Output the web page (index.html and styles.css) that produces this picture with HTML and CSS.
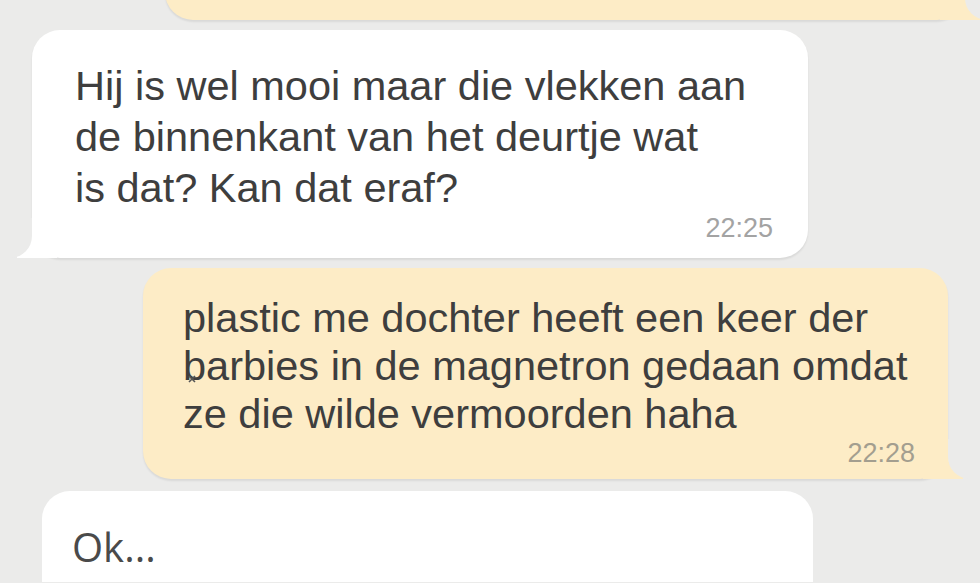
FILE: index.html
```html
<!DOCTYPE html>
<html lang="nl">
    <head>
        <meta charset="UTF-8" />
        <meta name="viewport" content="width=device-width, initial-scale=1.0" />
        <title>Chat</title>
        <link rel="stylesheet" href="styles.css">
    </head>
    <body>
        <div class="chat">
            <div class="bubble out top-bubble"></div>

            <div class="bubble in first">
                <p class="text">Hij is wel mooi maar die vlekken aan<br />de binnenkant van het deurtje wat<br />is dat? Kan dat eraf?</p>
                <div class="time">22:25</div>
            </div>

            <div class="bubble out second">
                <p class="text">plastic me dochter heeft een keer der<br /><span class="mark">b<svg class="stray" width="10" height="10" viewBox="0 0 10 10"><path d="M2 2 L8 8 M8 2 L2 8" stroke="#555" stroke-width="1.6" /></svg></span>arbies in de magnetron gedaan omdat<br />ze die wilde vermoorden haha</p>
                <div class="time">22:28</div>
            </div>

            <div class="bubble in third">
                <p class="text ok">Ok...</p>
            </div>
        </div>
    </body>
</html>
```

FILE: styles.css
```css
body {
    margin: 0;
    background-color: #ebebea;
    font-family: "Liberation Sans", Arial, sans-serif;
    overflow: hidden;
    height: 583px;
}
.chat {
    display: flex;
    flex-direction: column;
    gap: 10px;
}
.bubble {
    position: relative;
    border-radius: 28px;
    box-shadow: 0 2px 2px rgba(0, 0, 0, 0.08);
}
.in {
    background-color: #fff;
    align-self: flex-start;
}
.out {
    background-color: #fdecc6;
    align-self: flex-end;
}
.in::before,
.out::before {
    content: "";
    position: absolute;
    bottom: 0;
    width: 40px;
    height: 40px;
}
.in::after,
.out::after {
    content: "";
    position: absolute;
    bottom: 0;
    width: 40px;
    height: 40px;
    background-color: #ebebea;
}
.in::before {
    left: -15px;
    background-color: #fff;
}
.in::after {
    left: -40px;
    border-bottom-right-radius: 22px;
}
.out::before {
    right: -15px;
    background-color: #fdecc6;
}
.out::after {
    right: -40px;
    border-bottom-left-radius: 22px;
}
.top-bubble {
    width: 800px;
    height: 100px;
    margin-top: -80px;
    margin-right: 15px;
}
.text {
    margin: 0;
    font-size: 41.5px;
    line-height: 51px;
    color: #3e3e3e;
}
.time {
    text-align: right;
    font-size: 27px;
    color: #a3a3a3;
    line-height: 30px;
}
.first {
    width: 776px;
    margin-left: 32px;
    padding: 30px 35px 15px 43px;
    box-sizing: border-box;
    height: 228px;
}
.second {
    width: 805px;
    margin-right: 32px;
    padding: 26px 33px 15px 40px;
    box-sizing: border-box;
    height: 211px;
}
.second .text {
    line-height: 48px;
}
.second .time {
    color: #a39e8f;
}
.third {
    width: 771px;
    margin-left: 42px;
    margin-top: 2px;
    padding: 30px 30px 0 30px;
    box-sizing: border-box;
    height: 91px;
    border-bottom-left-radius: 0;
    border-bottom-right-radius: 0;
    box-shadow: none;
}
.third::before,
.third::after {
    display: none;
}
.ok {
    font-family: "Open Sans", "Liberation Sans", sans-serif;
    font-size: 40px;
    color: #4a4a4a;
}
.mark {
    position: relative;
}
.stray {
    position: absolute;
    left: 4px;
    top: 32px;
}
```
